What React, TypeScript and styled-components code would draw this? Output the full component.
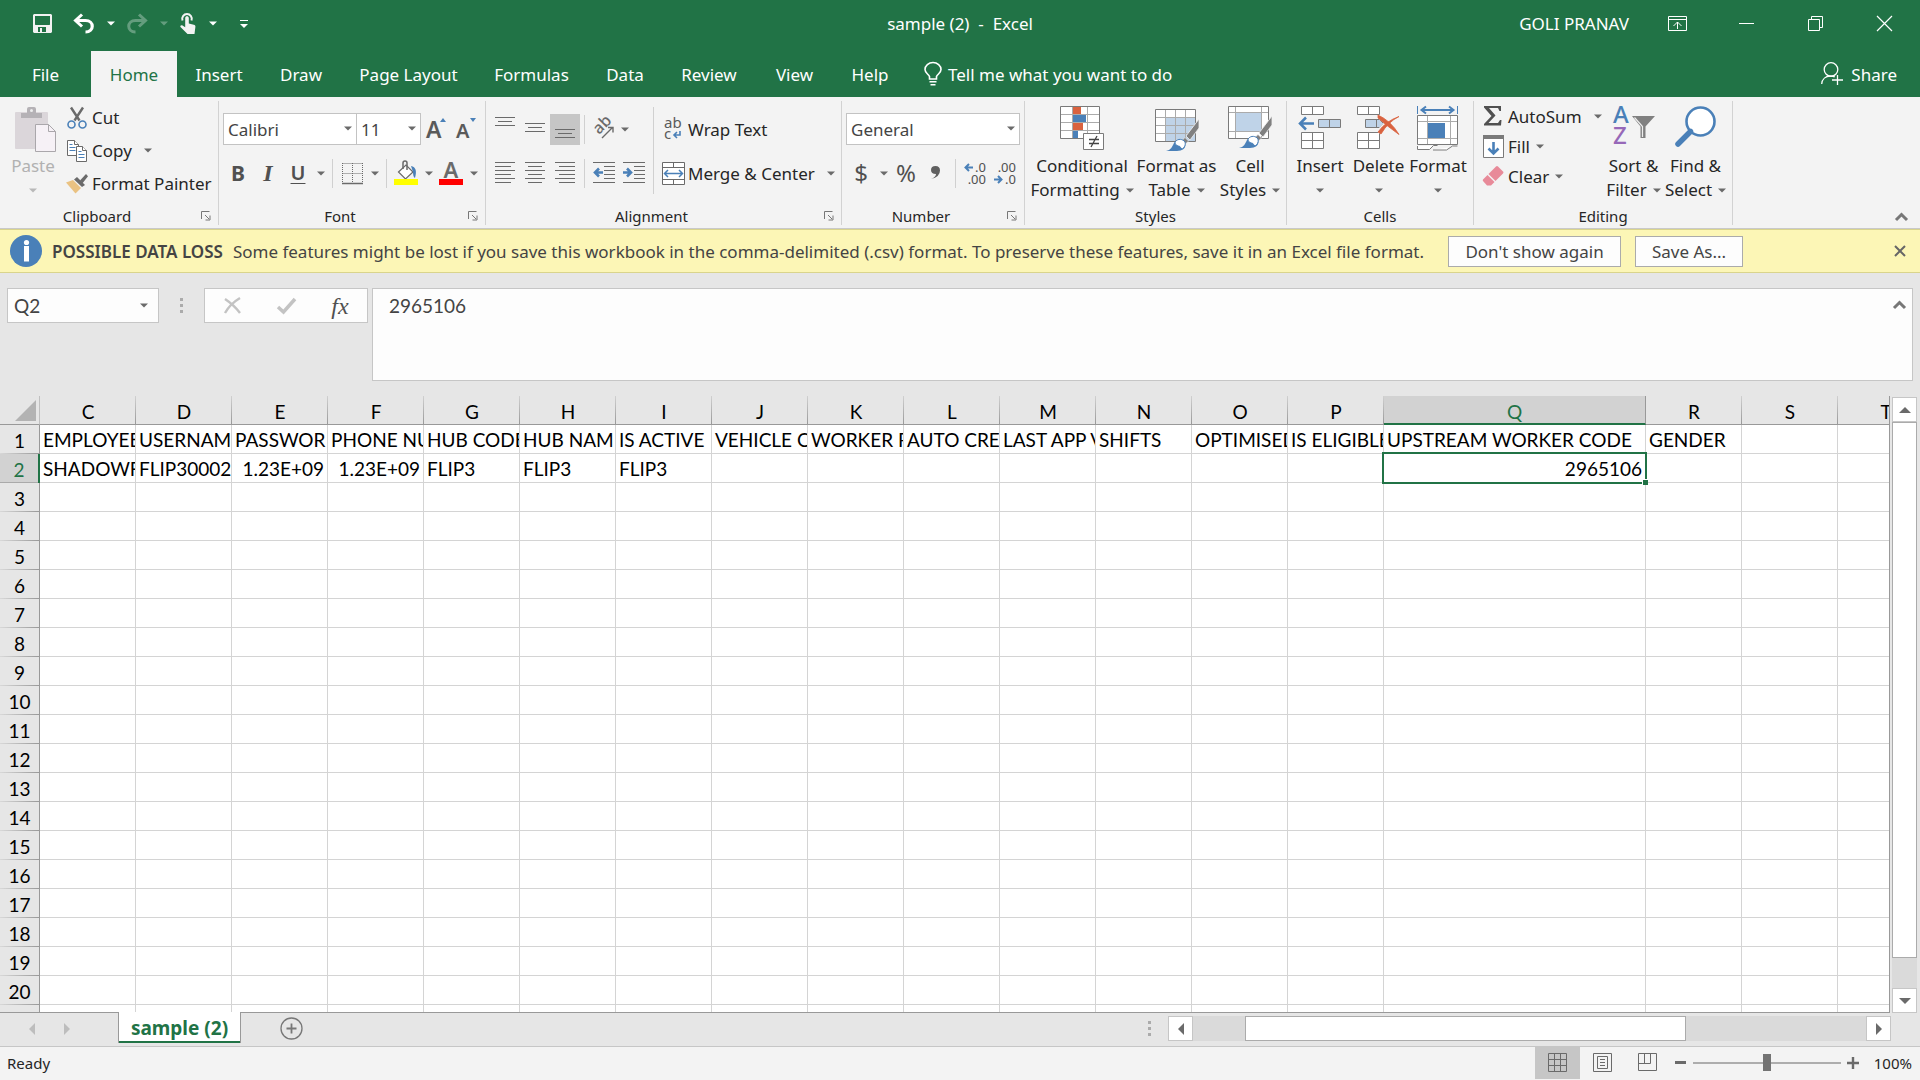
import React from "react";
import styled, { createGlobalStyle, css } from "styled-components";

const green = "#217346";
const blue = "#4a80b8";
const gray = "#6a6a6a";
const ui = `"Noto Sans", "Open Sans", sans-serif`;
const sheetFont = `Lato, "Noto Sans", sans-serif`;

const Global = createGlobalStyle`
  *, *::before, *::after { box-sizing: border-box; }
  body { margin: 0; font-family: ${ui}; font-size: 17px; color: #262626; overflow: hidden; }
  button, input, select, textarea { font: inherit; color: inherit; margin: 0; padding: 0; border: 0; background: none; border-radius: 0; outline: none; }
  svg { display: block; flex: none; overflow: visible; }
`;

const App_ = styled.div`
  display: flex;
  flex-direction: column;
  height: 100vh;
  background: #e6e6e6;
`;

/* ---------- title bar ---------- */
const TitleBar = styled.header`
  display: grid;
  grid-template-columns: 1fr auto 1fr;
  align-items: center;
  height: 51px;
  background: ${green};
  color: #fff;
`;
const Quick = styled.div`
  display: flex;
  align-items: center;
  padding: 0 0 4px 19px;
`;
const Title = styled.h1`
  margin: 0;
  padding-bottom: 4px;
  font-size: 17px;
  font-weight: 400;
  white-space: pre;
`;
const WindowSide = styled.div`
  display: flex;
  align-items: center;
  justify-content: flex-end;
  padding: 0 1px 4px 0;
`;
const User = styled.span`
  margin-right: 14px;
`;
const PlainButton = styled.button<{ $w?: number; $h?: number; $on?: boolean; $faded?: boolean }>`
  display: flex;
  align-items: center;
  justify-content: center;
  flex: none;
  width: ${(p) => p.$w ?? 30}px;
  height: ${(p) => p.$h ?? 30}px;
  background: ${(p) => (p.$on ? "#c6c6c6" : "none")};
  opacity: ${(p) => (p.$faded ? 0.3 : 1)};
`;

/* ---------- tabs ---------- */
const TabRow = styled.nav`
  display: flex;
  align-items: stretch;
  height: 46px;
  background: ${green};
  color: #fff;
`;
const Tab = styled.button<{ $w: number; $active?: boolean }>`
  width: ${(p) => p.$w}px;
  white-space: nowrap;
  ${(p) => p.$active && css`background: #f3f3f3; color: ${green};`}
`;
const TellMe = styled.button`
  display: flex;
  align-items: center;
  gap: 6px;
  margin-left: 18px;
  white-space: nowrap;
`;
const Share = styled.button`
  display: flex;
  align-items: center;
  gap: 8px;
  margin-left: auto;
  padding-right: 23px;
`;

/* ---------- ribbon ---------- */
const Ribbon = styled.section`
  display: flex;
  align-items: stretch;
  height: 132px;
  padding: 4px 0 3px;
  background: #f3f3f3;
  border-bottom: 1px solid #c9c9c9;
`;
const GroupBox = styled.section<{ $w: number }>`
  display: flex;
  flex-direction: column;
  flex: 0 0 ${(p) => p.$w}px;
  border-right: 1px solid #d2d2d2;
`;
const GroupBody = styled.div`
  display: flex;
  flex: 1;
  padding: 0 4px;
`;
const GroupFoot = styled.footer`
  display: flex;
  align-items: center;
  height: 20px;
  padding-top: 2px;
  font-size: 15px;
  line-height: 18px;
`;
const GroupName = styled.span`
  flex: 1;
  text-align: center;
`;
const Stack = styled.div<{ $top?: number; $gap?: number }>`
  display: flex;
  flex-direction: column;
  padding-top: ${(p) => p.$top ?? 12}px;
  gap: ${(p) => p.$gap ?? 12}px;
`;
const Line = styled.div`
  display: flex;
  align-items: center;
  height: 32px;
`;
const Sep = styled.i<{ $h?: number }>`
  flex: none;
  width: 1px;
  height: ${(p) => p.$h ?? 29}px;
  margin: 0 4px;
  background: #d0d0d0;
`;
const BigButton = styled.button<{ $w: number; $off?: boolean }>`
  display: flex;
  flex-direction: column;
  align-items: center;
  flex: none;
  align-self: flex-start;
  width: ${(p) => p.$w}px;
  padding-top: 5px;
  line-height: 24px;
  color: ${(p) => (p.$off ? "#b1b1b1" : "#262626")};
`;
const BigIcon = styled.span`
  display: block;
  height: 48px;
`;
const BigLine = styled.span`
  display: flex;
  align-items: center;
  justify-content: center;
  gap: 6px;
  height: 24px;
  white-space: nowrap;
`;
const SmallButton = styled.button<{ $h: number }>`
  display: flex;
  align-items: center;
  height: ${(p) => p.$h}px;
  white-space: nowrap;
`;
const SmallIcon = styled.span<{ $w?: number }>`
  display: flex;
  justify-content: center;
  width: ${(p) => p.$w ?? 28}px;
`;
const SmallText = styled.span<{ $gap?: number }>`
  margin-right: ${(p) => p.$gap ?? 12}px;
`;
const Combo = styled.label<{ $w: number; $joined?: boolean }>`
  position: relative;
  display: block;
  width: ${(p) => p.$w}px;
  height: 32px;
  color: #444;
  svg { position: absolute; right: 5px; top: 13px; pointer-events: none; }
  select {
    appearance: none;
    width: 100%;
    height: 32px;
    padding: 0 20px 0 4px;
    background: #fff;
    border: 1px solid #c3c3c3;
    border-left-width: ${(p) => (p.$joined ? 0 : 1)}px;
  }
`;
const Glyph = styled.span<{ $size: number; $bold?: boolean; $italic?: boolean; $line?: boolean }>`
  font-size: ${(p) => p.$size}px;
  line-height: 24px;
  color: #505050;
  font-weight: ${(p) => (p.$bold ? 700 : p.$line ? 600 : 400)};
  font-style: ${(p) => (p.$italic ? "italic" : "normal")};
  font-family: ${(p) => (p.$italic ? `"Liberation Serif", serif` : ui)};
  text-decoration: ${(p) => (p.$line ? "underline" : "none")};
  text-decoration-thickness: 1px;
  text-underline-offset: 3px;
`;
const Collapse = styled.button`
  align-self: flex-end;
  margin: 0 12px 4px auto;
`;

/* ---------- message bar ---------- */
const Message = styled.section`
  display: flex;
  align-items: center;
  height: 44px;
  padding: 0 14px 0 10px;
  background: #fcf6b6;
  border-top: 1px solid #d9d48c;
  border-bottom: 1px solid #d9d48c;
  color: #444;
  white-space: nowrap;
`;
const Strong = styled.strong`
  margin: 0 10px;
  font-weight: 600;
`;
const MessageButton = styled.button<{ $w: number; $m: number }>`
  width: ${(p) => p.$w}px;
  height: 31px;
  margin-left: ${(p) => p.$m}px;
  background: #fdfdfd;
  border: 1px solid #ababab;
`;
const CloseMessage = styled.button`
  margin-left: auto;
`;

/* ---------- formula bar ---------- */
const FormulaBar = styled.section`
  display: flex;
  align-items: flex-start;
  height: 123px;
  padding: 15px 7px;
  font-family: ${sheetFont};
  font-size: 19px;
  color: #444;
`;
const Field = styled.div<{ $w: number }>`
  display: flex;
  align-items: center;
  width: ${(p) => p.$w}px;
  height: 35px;
  background: #fdfdfd;
  border: 1px solid #c6c6c6;
`;
const NameInput = styled.input`
  flex: 1;
  min-width: 0;
  padding-left: 6px;
`;
const DotsBox = styled.span`
  display: flex;
  justify-content: center;
  align-items: center;
  width: 45px;
  height: 35px;
`;
const FormulaBox = styled.div`
  display: flex;
  flex: 1;
  align-items: flex-start;
  height: 93px;
  margin-left: 4px;
  padding: 4px 6px 0 16px;
  background: #fdfdfd;
  border: 1px solid #c6c6c6;
`;
const FormulaText = styled.textarea`
  flex: 1;
  height: 80px;
  line-height: 25px;
  resize: none;
`;

/* ---------- sheet ---------- */
const SheetArea = styled.main`
  display: flex;
  flex: 1;
  min-height: 0;
`;
const SheetView = styled.div`
  flex: 1;
  min-width: 0;
  overflow: hidden;
  border-bottom: 1px solid #999;
  border-right: 1px solid #999;
  background: #e6e6e6;
`;
const Table = styled.table`
  table-layout: fixed;
  width: 0;
  border-collapse: separate;
  border-spacing: 0;
  font-family: ${sheetFont};
  font-size: 19px;
  line-height: 26px;
  color: #000;
`;
const Corner = styled.td`
  height: 29px;
  padding: 0;
  border-bottom: 1px solid #999;
  border-right: 1px solid #c0c0c0;
  svg { margin: 0 3px 0 auto; }
`;
const ColHead = styled.th<{ $on?: boolean }>`
  height: 29px;
  padding: 4px 0 0;
  font-weight: 400;
  line-height: 24px;
  border-bottom: 1px solid #999;
  background: linear-gradient(#d0d0d0, #999) right / 1px 100% no-repeat #e6e6e6;
  ${(p) =>
    p.$on &&
    css`
      color: ${green};
      background: #d2d2d2;
      border-right: 1px solid #999;
      border-bottom: 2px solid ${green};
      line-height: 23px;
    `}
`;
const RowHead = styled.th<{ $on?: boolean }>`
  height: 29px;
  padding: 2px 0 0;
  font-weight: 400;
  border-right: 1px solid #999;
  background: linear-gradient(90deg, #d8d8d8, #999) bottom / 100% 1px no-repeat #e6e6e6;
  ${(p) =>
    p.$on &&
    css`
      color: ${green};
      background: linear-gradient(#aaa, #aaa) bottom / 100% 1px no-repeat #d2d2d2;
      border-right: 2px solid ${green};
    `}
`;
const Cell = styled.td<{ $right?: boolean; $on?: boolean }>`
  position: relative;
  height: 29px;
  padding: 2px 3px 0;
  background: #fff;
  border-right: 1px solid #d4d4d4;
  border-bottom: 1px solid #d4d4d4;
  overflow: ${(p) => (p.$on ? "visible" : "hidden")};
  white-space: nowrap;
  text-align: ${(p) => (p.$right ? "right" : "left")};
`;
const Selection = styled.span`
  position: absolute;
  z-index: 1;
  inset: -2px;
  border: 2px solid ${green};
  &::after {
    content: "";
    position: absolute;
    right: -3px;
    bottom: -3px;
    width: 6px;
    height: 6px;
    background: ${green};
    border: solid #fff;
    border-width: 1px 0 0 1px;
  }
`;

const VScroll = styled.div`
  display: flex;
  flex-direction: column;
  width: 30px;
  padding: 1px 3px 0 2px;
`;
const ScrollButton = styled.button`
  display: flex;
  align-items: center;
  justify-content: center;
  flex: none;
  width: 25px;
  height: 25px;
  background: #fff;
  border: 1px solid #c6c6c6;
`;
const Track = styled.div<{ $col?: boolean }>`
  display: flex;
  flex: 1;
  flex-direction: ${(p) => (p.$col ? "column" : "row")};
  background: #dadada;
`;
const Part = styled.div<{ $f: number; $thumb?: boolean }>`
  flex: ${(p) => p.$f} 1 0;
  ${(p) => p.$thumb && css`background: #fff; border: 1px solid #ababab;`}
`;

/* ---------- sheet tabs & status ---------- */
const SheetTabs = styled.nav`
  display: flex;
  align-items: flex-start;
  height: 34px;
  padding-right: 29px;
  border-bottom: 1px solid #c6c6c6;
`;
const TabNav = styled.div`
  display: flex;
  align-items: center;
  width: 118px;
  height: 32px;
  padding-left: 14px;
`;
const SheetTab = styled.button`
  width: 123px;
  height: 31px;
  margin-top: -1px;
  background: #fff;
  border: solid #999;
  border-width: 0 1px;
  box-shadow: inset 0 -2px ${green};
  color: ${green};
  font-size: 19px;
  font-weight: 700;
  line-height: 28px;
  white-space: nowrap;
`;
const AddSheet = styled.button`
  margin: 4px 0 0 39px;
`;
const HScroll = styled.div`
  display: flex;
  flex: 0 1 723px;
  height: 25px;
  margin-top: 3px;
`;
const TabDots = styled.span`
  margin: 8px 17px 0 auto;
`;
const Status = styled.footer`
  display: flex;
  align-items: center;
  height: 33px;
  padding: 0 8px 2px 7px;
  background: #f3f3f3;
  font-size: 15px;
`;
const Views = styled.div`
  display: flex;
  margin-left: auto;
`;
const Zoom = styled.input`
  appearance: none;
  width: 148px;
  height: 17px;
  margin: 0 3px;
  background: linear-gradient(#adadad, #adadad) center / 100% 2px no-repeat;
  &::-webkit-slider-thumb {
    appearance: none;
    width: 8px;
    height: 17px;
    background: #737373;
  }
`;
const Percent = styled.span`
  width: 50px;
  text-align: right;
`;

/* ---------- icons ---------- */
const Arrow = ({ c = gray }: { c?: string }) => (
  <svg width="8" height="5" viewBox="0 0 8 5"><path d="M0 .5h8L4 4.5z" fill={c} /></svg>
);
const DropButton = ({ w = 15, c, label, faded }: { w?: number; c?: string; label: string; faded?: boolean }) => (
  <PlainButton $w={w} aria-label={label} $faded={faded}><Arrow c={c} /></PlainButton>
);
const Dots = () => (
  <svg width="3" height="16"><path d="M0 0h3v3H0zM0 6h3v3H0zM0 12h3v3H0z" fill="#ababab" /></svg>
);
const Lines = ({ rows }: { rows: [number, number, number][] }) => (
  <svg width="20" height="24">{rows.map(([x, y, w]) => <rect key={y} x={x} y={y} width={w} height="1" fill={gray} />)}</svg>
);
const Chevron = () => (
  <svg width="13" height="9"><path d="M1 8l5.500-5.500L12 8" fill="none" stroke="#777" strokeWidth="3" /></svg>
);
const Launcher = () => (
  <PlainButton $w={24} $h={20} aria-label="More options">
    <svg width="10" height="10" fill="none" stroke="#777"><path d="M.5 8V.500H8.500M4 4l4 4M9 4.500V9H4.500" /></svg>
  </PlainButton>
);
const Save = () => (
  <svg width="19" height="19"><path fillRule="evenodd" d="M1 0h17l1 1v17l-1 1H1l-1-1V1zM2 2v8.500l.5.500h14l.5-.500V2zM5 13v5h2v-4h2v4h4v-5z" fill="#f2f2f2" /></svg>
);
const Undo = () => (
  <svg width="22" height="20" fill="none" stroke="#fff"><path d="M3 6.500h9.500c9 0 9 11.500 0 11.500" strokeWidth="3.200" /><path d="M9 .5L2.500 6.500L9 12.500" strokeWidth="3" /></svg>
);
const Redo = () => (
  <svg width="22" height="20" fill="none" stroke="#fff"><path d="M19 6.500H9.500c-9 0-9 11.500 0 11.500" strokeWidth="3" /><path d="M13 .5l6.500 6L13 12.500" strokeWidth="3" /></svg>
);
const Touch = () => (
  <svg width="16" height="21" fill="#f3f3f3"><path d="M2.500 9A4.800 4.800 0 1 1 11.500 9" fill="none" stroke="#f3f3f3" strokeWidth="2" transform="translate(0 -1.500)" /><path d="M5.200 5c0-2.500 3.600-2.500 3.600 0v5.500l5 1.200c1.200.3 1.700 1 1.600 2L14.500 21H7.500L.5 14c-.8-1 .8-2.200 2-1.400l2.700 1.600z" /></svg>
);
const Bulb = () => (
  <svg width="18" height="24" fill="none" stroke="#fff" strokeWidth="1.600"><path d="M5.500 17v-2.500C4.500 12 1 11 1 7.500a8 7 0 0 1 16 0c0 3.500-3.500 4.500-4.500 7V17zM5.500 19.800h7M6.500 22.800h5" /></svg>
);
const Person = () => (
  <svg width="22" height="24" fill="none" stroke="#fff" strokeWidth="1.300"><circle cx="10" cy="7.500" r="6.800" /><path d="M.7 22c.3-5 4-8 9-8 1.500 0 3 .3 4 1M16.500 13v10M11 18h11" /></svg>
);
const Scissors = () => (
  <svg width="20" height="22" fill="none"><path d="M4 .5l8.500 13M16 .5l-8.500 13" stroke="#6a6a6a" strokeWidth="2.400" /><circle cx="4.500" cy="17.500" r="3.500" stroke={blue} strokeWidth="1.600" /><circle cx="15.500" cy="17.500" r="3.500" stroke={blue} strokeWidth="1.600" /></svg>
);
const CopyIcon = () => (
  <svg width="20" height="22" fill="#fff" stroke="#6a6a6a"><path d="M.5.500h7l4 4v11H.5z" /><path d="M7.500.500v4h4" /><path d="M2.500 4.500h3M2.500 7.500h6M2.500 10.500h6" stroke={blue} /><path d="M9.500 6.500h6l4 4v11H9.500z" /><path d="M15.500 6.500v4h4" /><path d="M11.500 11.500h3M11.500 14.500h6M11.500 17.500h6" stroke={blue} /></svg>
);
const Painter = () => (
  <svg width="22" height="20"><path d="M0 8.500L7 6l8 8-5.500 5.500z" fill="#eac282" /><path d="M8 5.500l3-2.500 8 8-3 2z" fill="#6a6a6a" /><path d="M14 6.500L20 0l2 2.200-5.500 7z" fill="#6a6a6a" /></svg>
);
const PasteIcon = () => (
  <svg width="48" height="46" viewBox="-6 -1 48 46"><rect y="5" width="33" height="37" rx="1" fill="#dbd6da" /><path d="M6 6h6V2q0-2 2-2h5q2 0 2 2v4h6v5H6z" fill="#b5b2b6" /><circle cx="16.500" cy="3.500" r="1.500" fill="#eee" /><path d="M20.500 17.500h13l7 7v20h-20z" fill="#f6f1f6" stroke="#aaa7ab" /><path d="M33.500 17.500v7h7" fill="none" stroke="#aaa7ab" /></svg>
);
const BorderIcon = () => (
  <svg width="21" height="21" fill="none" stroke={gray}><path d="M.5.500H20M.5 10.500H20M.5 0V20M10.500 0V20M20.500 0V20" strokeDasharray="1 1" /><path d="M0 20.500h21" strokeWidth="1.500" /></svg>
);
const FillIcon = () => (
  <svg width="24" height="24"><path d="M4.500 11L12 4l7 7-7.500 7z" fill="#fff" stroke={gray} strokeWidth="1.200" /><path d="M9 8V2q0-2 2-2t2 2v7" fill="none" stroke={gray} strokeWidth="1.500" /><path d="M17 5c5 1 6 5 4 12q-2-1-2-6z" fill={blue} /><path d="M0 18h24v6H0z" fill="#ff0" /></svg>
);
const FontColorIcon = () => (
  <svg width="24" height="24"><text x="12" y="16.500" textAnchor="middle" fontSize="22" fontWeight="600" fill={gray} fontFamily="Noto Sans">A</text><path d="M0 18h24v6H0z" fill="red" /></svg>
);
const FontSize = ({ up }: { up?: boolean }) => (
  <svg width="22" height="24"><text x="1" y="21" fontSize={up ? 23 : 20} fontWeight="600" fill="#5a5a5a" fontFamily="Noto Sans">A</text><path d={up ? "M15 5h6l-3-4z" : "M15 1h6l-3 4z"} fill={blue} /></svg>
);
const Orient = () => (
  <svg width="20" height="24"><text transform="translate(5 18) rotate(-45)" fontSize="16" fontWeight="500" fill={gray} fontFamily="Noto Sans">ab</text><path d="M8 21L18.500 10.500M14 10.500h5v5" fill="none" stroke={gray} strokeWidth="1.400" /></svg>
);
const Indent = ({ right }: { right?: boolean }) => (
  <svg width="22" height="22"><path d="M0 .5h22M11 4.500h11M11 8.500h11M11 12.500h11M11 16.500h11M0 20.500h22" stroke={gray} /><path d={right ? "M0 10.500h8M4 6.500l4 4-4 4" : "M10 10.500H2M6 6.500l-4 4 4 4"} stroke={blue} strokeWidth="2.600" fill="none" /></svg>
);
const WrapIcon = () => (
  <svg width="18" height="24"><g fontSize="15" fill="#5a5a5a" fontFamily="Noto Sans"><text x="0" y="11">ab</text><text x="0" y="22">c</text></g><path d="M16 14v4h-6M13 15l-3 3 3 3" stroke={blue} strokeWidth="1.600" fill="none" /></svg>
);
const MergeIcon = () => (
  <svg width="23" height="23" fill="#fff" stroke={gray}><path d="M.5.500h22v22H.5zM.5 5.500h22M.5 17.500h22M11.500.500v5M11.500 17.500v5" /><path d="M3 11.500h17M6 8l-3.500 3.500L6 15M17 8l3.500 3.500L17 15" fill="none" stroke={blue} strokeWidth="1.500" /></svg>
);
const Decimals = ({ more }: { more?: boolean }) => (
  <svg width="22" height="22"><g fontSize="13" fill="#505050" fontFamily="Noto Sans" textAnchor="end"><text x="22" y="10">{more ? ".0" : ".00"}</text><text x="22" y="22">{more ? ".00" : ".0"}</text></g><path d={more ? "M9 5.500H2M5 2L1.500 5.500 5 9" : "M0 17.500h7M4 14l3.500 3.500L4 21"} stroke={blue} strokeWidth="2" fill="none" /></svg>
);
const CondIcon = () => (
  <svg width="44" height="45"><path d="M.5.500h39v32H.5z" fill="#fff" stroke="#7a7a7a" /><path d="M1 8.500h38M1 16.500h38M1 24.500h38M12.500 1v31M27.500 1v31" stroke="#ababab" /><path d="M13 1h8v7h-8zM13 17h10v7H13z" fill="#d9623f" /><path d="M13 9h13v7H13zM13 25h5v7h-5z" fill={blue} /><path d="M23.500 27.500h20v16h-20z" fill="#fff" stroke="#7a7a7a" /><path d="M29 33.500h10M29 37.500h10M37 30l-6 11" stroke="#444" strokeWidth="1.300" /></svg>
);
const Brush = ({ x, y }: { x: number; y: number }) => (
  <g transform={`translate(${x} ${y})`}><path d="M33-3v9l-9 12-4-4z" fill="#808080" stroke="#f3f3f3" strokeWidth=".8" /><path d="M19 15.500l-3 3 3.500 3.500 3-3z" fill="#808080" stroke="#f3f3f3" strokeWidth=".6" /><path d="M0 29c5-1 6-4 8-8 3-4 9-4 11 0 2 5-3 8-8 8z" fill={blue} /><path d="M9 20c3-4 8-3 10 0 1 3-1 6-3 7-2-1-1-3-4-3-2-1-3-2-3-4z" fill="#fff" stroke={blue} /></g>
);
const TableIcon = () => (
  <svg width="44" height="45"><path d="M.5 3.500h40v32H.5z" fill="#fff" stroke="#7a7a7a" /><path d="M11 12h29v23H11z" fill="#bfd3e8" /><path d="M1 11.500h39M1 19.500h39M1 27.500h39M10.500 4v31M20.500 4v31M30.500 4v31" stroke="#ababab" /><Brush x={11} y={16} /></svg>
);
const StyleIcon = () => (
  <svg width="44" height="45"><path d="M.5.500h40v32H.5z" fill="#fff" stroke="#7a7a7a" /><path d="M1 6.500h39M1 25.500h39M7.500 1v31M33.500 1v31" stroke="#ababab" /><path d="M8 7h25v18H8z" fill="#bfd3e8" /><Brush x={11} y={13} /></svg>
);
const InsertIcon = () => (
  <svg width="44" height="45" fill="#fff" stroke="#7a7a7a"><path d="M3.500.500h22v8h-22zM14.500.500v8M3.500 26.500h22v16h-22zM14.500 26.500v16M3.500 34.500h22" /><path d="M20.500 13.500h22v8h-22zM31.500 13.500v8" fill="#bfd3e8" /><path d="M16 17.500H3M8 11.500l-6 6 6 6" fill="none" stroke={blue} strokeWidth="2.500" /></svg>
);
const DeleteIcon = () => (
  <svg width="44" height="45" fill="#fff" stroke="#7a7a7a"><path d="M.5.500h22v8H.5zM11.500.500v8M.5 26.500h22v16H.5zM11.500 26.500v16M.5 34.500h22" /><path d="M8.500 13.500h14l4 4-4 4h-14zM19.500 13.500v8" fill="#bfd3e8" /><path d="M23 10q10 7 18 18M41 11Q29 17 22 27" fill="none" stroke="#f3f3f3" strokeWidth="6" /><path d="M21 9q13 6 21 19.500Q30 20 21 12zM42 10.500Q31 16 24 28l-3-2Q29 15 42 10.500z" fill="#d9623f" stroke="#d9623f" strokeWidth=".8" /></svg>
);
const FormatIcon = () => (
  <svg width="44" height="46" fill="#fff" stroke="#7a7a7a"><path d="M1.500 9.500h40v29h-40zM1.500 40v3.500h12l4-4 4 0M41.500 40l-5 0-6 4H17" /><path d="M2 15.500h39M2 32.500h39M11.500 10v28M34.500 10v28" stroke="#ababab" /><path d="M12 17h17v15H12z" fill={blue} stroke="none" /><path d="M1.500 0v8M41.500 0v8" stroke={blue} /><path d="M5 4h33M10 .5L5.500 4 10 7.500M33 .5L37.500 4 33 7.500" fill="none" stroke={blue} strokeWidth="2" /></svg>
);
const Sigma = () => (
  <svg width="18" height="20"><path d="M0 0h17v5h-1.500L14 2H5l6.500 7.500L4.500 17H14l2-3h1.500L17 19.500H0v-1.500l7.500-8L0 1.500z" fill="#505050" /></svg>
);
const FillDown = () => (
  <svg width="21" height="23"><path d="M.5.500h20v22H.5z" fill="#fff" stroke="#7a7a7a" /><path d="M0 0h21v4H0z" fill="#7a7a7a" /><path d="M10.500 7v11M5.500 13.500l5 5 5-5" fill="none" stroke={blue} strokeWidth="2.600" /></svg>
);
const Eraser = () => (
  <svg width="21" height="20" fill="#e88a99"><path d="M13 .5q1-1 2 0l5 5q1 1 0 2L12.500 15l-7-7z" /><path d="M4.500 9l7 7-3.500 3.500H4L0 15q-.5-1 0-1.500z" /></svg>
);
const SortIcon = () => (
  <svg width="42" height="45"><g fontSize="24" fontFamily="Noto Sans" fontWeight="500"><text x="0" y="17" fill={blue}>A</text><text x="0" y="38" fill="#9668b8">Z</text></g><path d="M19 10h23L32.500 20.500V32h-5V20.500z" fill="#808080" /><path d="M21.500 11.500l8 9V31" fill="none" stroke="#eee" strokeWidth="1.200" /></svg>
);
const FindIcon = () => (
  <svg width="41" height="45" fill="none" stroke={blue}><circle cx="25.500" cy="15.500" r="14" fill="#fff" strokeWidth="2.600" /><path d="M15.500 25.500L3 38" strokeWidth="5.500" strokeLinecap="round" /></svg>
);

/* ---------- parts ---------- */
const Group = ({ name, w, launcher, children }: { name: string; w: number; launcher?: boolean; children: React.ReactNode }) => (
  <GroupBox $w={w} aria-label={name}>
    <GroupBody>{children}</GroupBody>
    <GroupFoot><GroupName>{name}</GroupName>{launcher && <Launcher />}</GroupFoot>
  </GroupBox>
);
const Big = ({ w, icon, a, b, off }: { w: number; icon: React.ReactNode; a: string; b?: string; off?: boolean }) => (
  <BigButton $w={w} $off={off}>
    <BigIcon>{icon}</BigIcon>
    <BigLine>{a}</BigLine>
    <BigLine>{b}<Arrow c={off ? "#b8b8b8" : gray} /></BigLine>
  </BigButton>
);

const tabs: [string, number][] = [
  ["File", 89], ["Home", 86], ["Insert", 84], ["Draw", 80], ["Page Layout", 135], ["Formulas", 111],
  ["Data", 76], ["Review", 92], ["View", 79], ["Help", 72],
];
const columns = "CDEFGHIJKLMNOPQRST".split("");
const cells: Record<string, string> = {
  C1: "EMPLOYEE", D1: "USERNAM", E1: "PASSWOR", F1: "PHONE NU", G1: "HUB CODE", H1: "HUB NAM",
  I1: "IS ACTIVE", J1: "VEHICLE C", K1: "WORKER R", L1: "AUTO CRE", M1: "LAST APP V", N1: "SHIFTS",
  O1: "OPTIMISED", P1: "IS ELIGIBLE", Q1: "UPSTREAM WORKER CODE", R1: "GENDER",
  C2: "SHADOWF", D2: "FLIP30002", E2: "1.23E+09", F2: "1.23E+09", G2: "FLIP3", H2: "FLIP3", I2: "FLIP3", Q2: "2965106",
};
const numeric = new Set(["E2", "F2", "Q2"]);
const rows = Array.from({ length: 21 }, (_, i) => i + 1);

export default function App() {
  return (
    <App_>
      <Global />
      <TitleBar>
        <Quick>
          <PlainButton $w={46} aria-label="Save"><Save /></PlainButton>
          <PlainButton $w={38} aria-label="Undo"><Undo /></PlainButton>
          <DropButton c="#fff" label="Undo history" />
          <PlainButton $w={38} $faded aria-label="Redo"><Redo /></PlainButton>
          <DropButton c="#fff" faded label="Redo history" />
          <PlainButton $w={34} aria-label="Touch mode"><Touch /></PlainButton>
          <DropButton c="#fff" label="Touch options" />
          <PlainButton $w={48} aria-label="Customize toolbar">
            <svg width="8" height="8" fill="#fff"><path d="M0 0h8v1H0zM0 4h8L4 8z" /></svg>
          </PlainButton>
        </Quick>
        <Title>{"sample (2)  -  Excel"}</Title>
        <WindowSide>
          <User>GOLI PRANAV</User>
          <PlainButton $w={69} aria-label="Ribbon display options">
            <svg width="20" height="16" fill="none" stroke="#fff"><path d="M.5.500h18v14H.5zM.5 3.500h18M9.500 13V6M5.500 10l4-4 4 4" /></svg>
          </PlainButton>
          <PlainButton $w={69} aria-label="Minimize"><svg width="15" height="2"><path d="M0 .5h15" stroke="#fff" /></svg></PlainButton>
          <PlainButton $w={69} aria-label="Restore">
            <svg width="15" height="15" fill="none" stroke="#fff"><path d="M.5 3.500h11v11H.5zM3.500 3V.500h11v11H12" /></svg>
          </PlainButton>
          <PlainButton $w={69} aria-label="Close"><svg width="15" height="15"><path d="M0 0l15 15M15 0L0 15" stroke="#fff" strokeWidth="1.200" /></svg></PlainButton>
        </WindowSide>
      </TitleBar>

      <TabRow>
        <Tab $w={91}>File</Tab>
        {tabs.slice(1).map(([t, w]) => <Tab key={t} $w={w} $active={t === "Home"}>{t}</Tab>)}
        <TellMe><Bulb />Tell me what you want to do</TellMe>
        <Share><Person />Share</Share>
      </TabRow>

      <Ribbon>
        <Group name="Clipboard" w={219} launcher>
          <Big w={58} off icon={<PasteIcon />} a="Paste" />
          <Stack $top={0} $gap={0}>
            <SmallButton $h={33}><SmallIcon $w={30}><Scissors /></SmallIcon>Cut</SmallButton>
            <SmallButton $h={33}><SmallIcon $w={30}><CopyIcon /></SmallIcon><SmallText>Copy</SmallText><Arrow /></SmallButton>
            <SmallButton $h={33}><SmallIcon $w={30}><Painter /></SmallIcon>Format Painter</SmallButton>
          </Stack>
        </Group>

        <Group name="Font" w={267} launcher>
          <Stack>
            <Line>
              <Combo $w={134}><select aria-label="Font"><option>Calibri</option></select><Arrow /></Combo>
              <Combo $w={64} $joined><select aria-label="Font size"><option>11</option></select><Arrow /></Combo>
              <PlainButton aria-label="Increase font size"><FontSize up /></PlainButton>
              <PlainButton aria-label="Decrease font size"><FontSize /></PlainButton>
            </Line>
            <Line>
              <PlainButton><Glyph $size={21} $bold>B</Glyph></PlainButton>
              <PlainButton><Glyph $size={24} $italic $bold>I</Glyph></PlainButton>
              <PlainButton><Glyph $size={20} $line>U</Glyph></PlainButton>
              <DropButton label="Underline style" />
              <Sep />
              <PlainButton aria-label="Borders"><BorderIcon /></PlainButton>
              <DropButton label="Border options" />
              <Sep />
              <PlainButton aria-label="Fill color"><FillIcon /></PlainButton>
              <DropButton label="Fill colors" />
              <PlainButton aria-label="Font color"><FontColorIcon /></PlainButton>
              <DropButton label="Font colors" />
            </Line>
          </Stack>
        </Group>

        <Group name="Alignment" w={356} launcher>
          <Stack>
            <Line>
              <PlainButton aria-label="Top align"><Lines rows={[[0, 0, 20], [3, 4, 14], [0, 8, 20]]} /></PlainButton>
              <PlainButton aria-label="Middle align"><Lines rows={[[0, 6, 20], [3, 10, 14], [0, 14, 20]]} /></PlainButton>
              <PlainButton $h={31} $on aria-label="Bottom align"><Lines rows={[[0, 12, 20], [3, 16, 14], [0, 20, 20]]} /></PlainButton>
              <Sep />
              <PlainButton aria-label="Orientation"><Orient /></PlainButton>
              <DropButton w={12} label="Orientation options" />
            </Line>
            <Line>
              <PlainButton aria-label="Align left"><Lines rows={[[0, 1, 20], [0, 5, 16], [0, 9, 20], [0, 13, 16], [0, 17, 20], [0, 21, 16]]} /></PlainButton>
              <PlainButton aria-label="Center"><Lines rows={[[0, 1, 20], [3, 5, 14], [0, 9, 20], [3, 13, 14], [0, 17, 20], [3, 21, 14]]} /></PlainButton>
              <PlainButton aria-label="Align right"><Lines rows={[[0, 1, 20], [4, 5, 16], [0, 9, 20], [4, 13, 16], [0, 17, 20], [4, 21, 16]]} /></PlainButton>
              <Sep />
              <PlainButton aria-label="Decrease indent"><Indent /></PlainButton>
              <PlainButton aria-label="Increase indent"><Indent right /></PlainButton>
            </Line>
          </Stack>
          <Stack $top={6}><Sep $h={87} /></Stack>
          <Stack>
            <SmallButton $h={32}><SmallIcon $w={30}><WrapIcon /></SmallIcon>Wrap Text</SmallButton>
            <SmallButton $h={32}><SmallIcon $w={30}><MergeIcon /></SmallIcon><SmallText>Merge &amp; Center</SmallText><Arrow /></SmallButton>
          </Stack>
        </Group>

        <Group name="Number" w={183} launcher>
          <Stack>
            <Combo $w={174}><select aria-label="Number format"><option>General</option></select><Arrow /></Combo>
            <Line>
              <PlainButton><Glyph $size={24}>$</Glyph></PlainButton>
              <DropButton label="Currency options" />
              <PlainButton><Glyph $size={24}>%</Glyph></PlainButton>
              <PlainButton aria-label="Comma style"><svg width="10" height="14"><path d="M0 13q5-2 5-5-5 0-5-4 0-4 4.500-4Q9 0 9 4.500 9 11 0 13z" fill="#5f5f5f" /></svg></PlainButton>
              <Sep />
              <PlainButton aria-label="Increase decimal"><Decimals more /></PlainButton>
              <PlainButton aria-label="Decrease decimal"><Decimals /></PlainButton>
            </Line>
          </Stack>
        </Group>

        <Group name="Styles" w={262}>
          <Big w={106} icon={<CondIcon />} a="Conditional" b="Formatting" />
          <Big w={83} icon={<TableIcon />} a="Format as" b="Table" />
          <Big w={64} icon={<StyleIcon />} a="Cell" b="Styles" />
        </Group>

        <Group name="Cells" w={187}>
          <Big w={58} icon={<InsertIcon />} a="Insert" />
          <Big w={59} icon={<DeleteIcon />} a="Delete" />
          <Big w={60} icon={<FormatIcon />} a="Format" />
        </Group>

        <Group name="Editing" w={259}>
          <Stack $top={0} $gap={0}>
            <SmallButton $h={30}><SmallIcon $w={30}><Sigma /></SmallIcon><SmallText>AutoSum</SmallText><Arrow /></SmallButton>
            <SmallButton $h={30}><SmallIcon $w={30}><FillDown /></SmallIcon><SmallText $gap={6}>Fill</SmallText><Arrow /></SmallButton>
            <SmallButton $h={30}><SmallIcon $w={30}><Eraser /></SmallIcon><SmallText $gap={6}>Clear</SmallText><Arrow /></SmallButton>
          </Stack>
          <Big w={64} icon={<SortIcon />} a="Sort &amp;" b="Filter" />
          <Big w={60} icon={<FindIcon />} a="Find &amp;" b="Select" />
        </Group>
        <Collapse aria-label="Collapse ribbon"><Chevron /></Collapse>
      </Ribbon>

      <Message>
        <svg width="32" height="32"><circle cx="16" cy="16" r="16" fill={blue} /><path d="M14 11h5v15.500h-5z" fill="#fff" /><circle cx="16.500" cy="7.500" r="2.600" fill="#fff" /></svg>
        <Strong>POSSIBLE DATA LOSS</Strong>
        <span>Some features might be lost if you save this workbook in the comma-delimited (.csv) format. To preserve these features, save it in an Excel file format.</span>
        <MessageButton $w={173} $m={24}>Don't show again</MessageButton>
        <MessageButton $w={108} $m={14}>Save As...</MessageButton>
        <CloseMessage aria-label="Dismiss"><svg width="12" height="12"><path d="M1 1l10 10M11 1L1 11" stroke="#666" strokeWidth="2" /></svg></CloseMessage>
      </Message>

      <FormulaBar>
        <Field $w={152}>
          <NameInput aria-label="Name box" defaultValue="Q2" />
          <DropButton w={28} label="Names" />
        </Field>
        <DotsBox><Dots /></DotsBox>
        <Field $w={164}>
          <PlainButton $w={54} aria-label="Cancel"><svg width="17" height="15"><path d="M1 1q9 6 15 14M16 0Q6 6 1 15" stroke="#c3c3c3" strokeWidth="2.400" fill="none" /></svg></PlainButton>
          <PlainButton $w={54} aria-label="Enter"><svg width="19" height="16"><path d="M1 9l5.500 5L18 1" stroke="#c3c3c3" strokeWidth="3.500" fill="none" /></svg></PlainButton>
          <PlainButton $w={54}><Glyph $size={24} $italic>fx</Glyph></PlainButton>
        </Field>
        <FormulaBox>
          <FormulaText aria-label="Formula" defaultValue="2965106" />
          <PlainButton $w={14} $h={22} aria-label="Collapse formula bar"><Chevron /></PlainButton>
        </FormulaBox>
      </FormulaBar>

      <SheetArea>
        <SheetView>
          <Table>
            <colgroup>
              <col style={{ width: 40 }} />
              {columns.map((c) => <col key={c} style={{ width: c === "Q" ? 262 : 96 }} />)}
            </colgroup>
            <thead>
              <tr>
                <Corner><svg width="21" height="21"><path d="M21 0v21H0z" fill="#b3b3b3" /></svg></Corner>
                {columns.map((c) => <ColHead key={c} $on={c === "Q"}>{c}</ColHead>)}
              </tr>
            </thead>
            <tbody>
              {rows.map((r) => (
                <tr key={r}>
                  <RowHead $on={r === 2}>{r}</RowHead>
                  {columns.map((c) => (
                    <Cell key={c} $right={numeric.has(c + r)} $on={c + r === "Q2"}>
                      {cells[c + r]}
                      {c + r === "Q2" && <Selection />}
                    </Cell>
                  ))}
                </tr>
              ))}
            </tbody>
          </Table>
        </SheetView>
        <VScroll>
          <ScrollButton aria-label="Scroll up"><svg width="12" height="6"><path d="M0 6h12L6 0z" fill={gray} /></svg></ScrollButton>
          <Track $col><Part $f={537} $thumb /><Part $f={30} /></Track>
          <ScrollButton aria-label="Scroll down"><svg width="12" height="6"><path d="M0 0h12L6 6z" fill={gray} /></svg></ScrollButton>
        </VScroll>
      </SheetArea>

      <SheetTabs>
        <TabNav>
          <PlainButton $w={35} aria-label="Previous sheet"><svg width="6" height="12"><path d="M6 0v12L0 6z" fill="#bdbdbd" /></svg></PlainButton>
          <PlainButton $w={35} aria-label="Next sheet"><svg width="6" height="12"><path d="M0 0v12l6-6z" fill="#bdbdbd" /></svg></PlainButton>
        </TabNav>
        <SheetTab>sample (2)</SheetTab>
        <AddSheet aria-label="New sheet"><svg width="23" height="23" fill="none" stroke="#777"><circle cx="11.500" cy="11.500" r="10.500" strokeWidth="1.300" /><path d="M6.500 11.500h10M11.500 6.500v10" strokeWidth="1.800" /></svg></AddSheet>
        <TabDots><Dots /></TabDots>
        <HScroll>
          <ScrollButton aria-label="Scroll left"><svg width="6" height="12"><path d="M6 0v12L0 6z" fill={gray} /></svg></ScrollButton>
          <Track><Part $f={52} /><Part $f={440} $thumb /><Part $f={181} /></Track>
          <ScrollButton aria-label="Scroll right"><svg width="6" height="12"><path d="M0 0v12l6-6z" fill={gray} /></svg></ScrollButton>
        </HScroll>
      </SheetTabs>

      <Status>
        <span>Ready</span>
        <Views>
          <PlainButton $w={45} $h={33} $on aria-label="Normal view"><svg width="19" height="19" fill="none" stroke={gray}><path d="M.5.500h18v18H.5zM.5 6.500h18M.5 12.500h18M6.500.500v18M12.500.500v18" /></svg></PlainButton>
          <PlainButton $w={45} $h={33} aria-label="Page layout view"><svg width="19" height="19" fill="none" stroke={gray}><path d="M.5.500h18v18H.5zM4.500 3.500h10v12h-10zM7 6.500h5M7 9.500h5M7 12.500h5" /></svg></PlainButton>
          <PlainButton $w={45} $h={33} aria-label="Page break view"><svg width="19" height="19" fill="none" stroke={gray}><path d="M.5.500h18v17H.5zM.5 10.500h12V.500M6.500.500v10" /></svg></PlainButton>
        </Views>
        <PlainButton $w={20} aria-label="Zoom out"><svg width="11" height="3"><path d="M0 0h11v3H0z" fill={gray} /></svg></PlainButton>
        <Zoom type="range" aria-label="Zoom" defaultValue={50} />
        <PlainButton $w={18} aria-label="Zoom in"><svg width="12" height="12"><path d="M0 6h12M6 0v12" stroke={gray} strokeWidth="2.400" /></svg></PlainButton>
        <Percent>100%</Percent>
      </Status>
    </App_>
  );
}
